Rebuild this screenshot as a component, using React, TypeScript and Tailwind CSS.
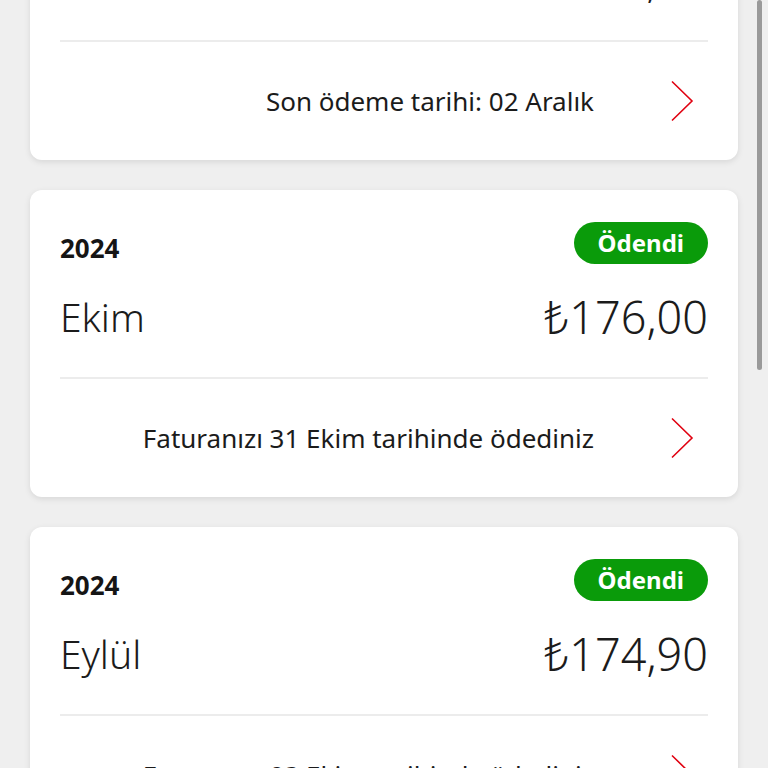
import React from 'react';

// --- Data ---

const BILLS = [
  { id: 1, year: '2024', month: 'Kasım', amount: '176,00', paid: false, note: 'Son ödeme tarihi: 02 Aralık' },
  { id: 2, year: '2024', month: 'Ekim', amount: '176,00', paid: true, note: 'Faturanızı 31 Ekim tarihinde ödediniz' },
  { id: 3, year: '2024', month: 'Eylül', amount: '174,90', paid: true, note: 'Faturanızı 03 Ekim tarihinde ödediniz' },
];

function Chevron() {
  return (
    <svg width="24" height="42" viewBox="0 0 24 42" fill="none" className="shrink-0">
      <polyline points="2,1.5 22,21 2,40.5" stroke="#e00010" strokeWidth="1.6" strokeLinejoin="miter" />
    </svg>
  );
}

function BillCard({ bill }: { bill: typeof BILLS[0] }) {
  return (
    <div className="bg-white rounded-xl shadow-[0_2px_6px_rgba(0,0,0,0.10)] px-[30px] pt-[32px]">
      <div className="flex items-center justify-between h-[42px]">
        <span className="text-[26px] font-bold text-[#151515] mt-[10px]">{bill.year}</span>
        {bill.paid ? (
          <span className="h-[42px] px-[24px] rounded-full bg-[#0a9b0a] text-white text-[24px] font-bold flex items-center">
            Ödendi
          </span>
        ) : (
          <span className="h-[42px] px-[24px] rounded-full bg-[#e60000] text-white text-[24px] font-bold flex items-center">
            Ödenmedi
          </span>
        )}
      </div>

      <div className="flex items-center justify-between mt-[26px] h-[53px]">
        <span className="text-[39px] font-light text-[#1b1b1b] leading-none">{bill.month}</span>
        <span className="text-[45px] font-light text-[#1b1b1b] leading-none">₺{bill.amount}</span>
      </div>

      <div className="mt-[34px] h-[2px] bg-[#ececec]"></div>

      <div className="h-[118px] flex items-center justify-end gap-[76px] pr-[14px]">
        <span className="text-[26px] text-[#1b1b1b]">{bill.note}</span>
        <Chevron />
      </div>
    </div>
  );
}

export default function App() {
  return (
    <div
      className="relative h-[768px] overflow-hidden bg-[#efefef]"
      style={{ fontFamily: '"Noto Sans", "Open Sans", "DejaVu Sans", sans-serif' }}
    >
      <div className="flex flex-col gap-[30px] px-[30px] -mt-[147px]">
        {BILLS.map(bill => (
          <BillCard key={bill.id} bill={bill} />
        ))}
      </div>

      {/* overlay scrollbar */}
      <div className="absolute right-[6px] top-0 w-[5px] h-[370px] rounded-full bg-[#9a9a9a]"></div>
    </div>
  );
}
